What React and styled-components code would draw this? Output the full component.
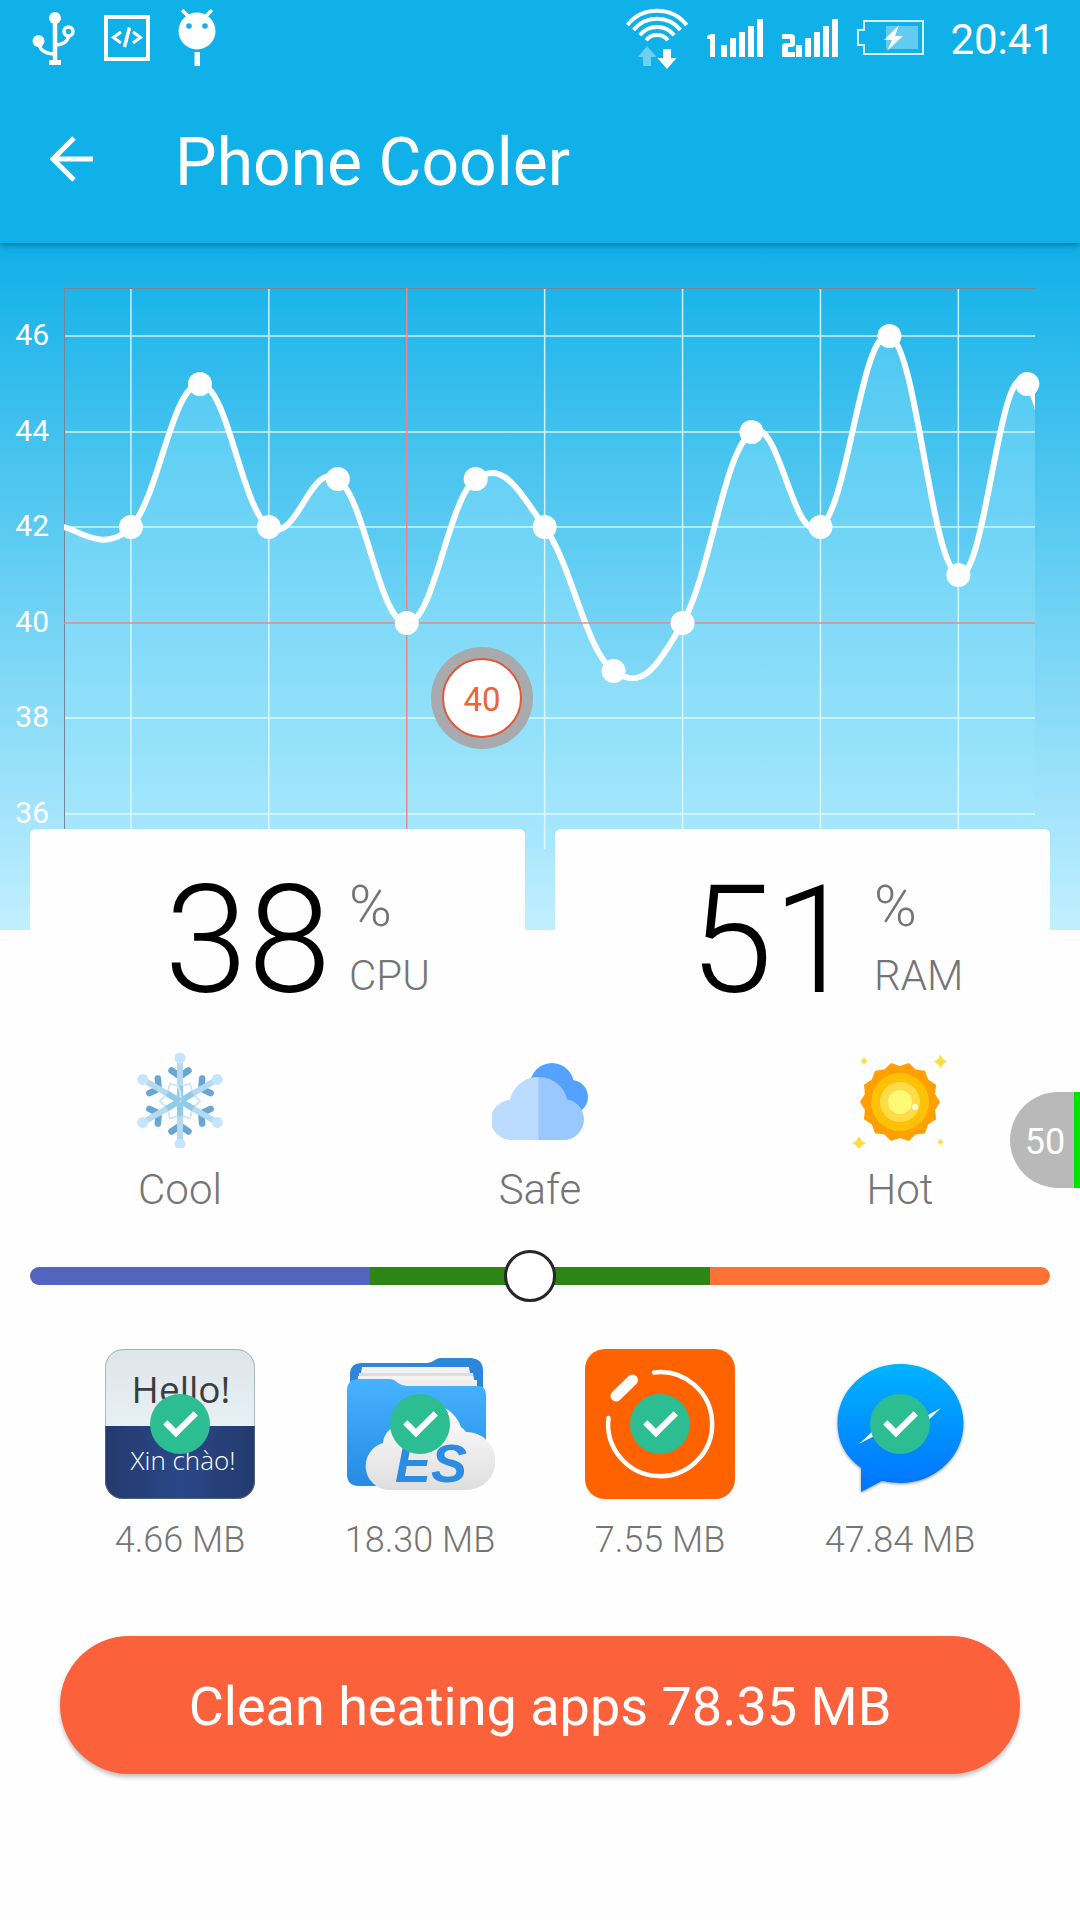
import React, { useState } from "react";
import styled, { createGlobalStyle } from "styled-components";

const GlobalStyle = createGlobalStyle`
  *, *::before { box-sizing: border-box; }
  body {
    margin: 0;
    background: #fefefe;
    font-family: Roboto, "Noto Sans", sans-serif;
  }
`;

const Screen = styled.main`
  position: relative;
  width: 100%;
  min-height: 100vh;
  overflow: hidden;
`;

const Header = styled.header`
  position: relative;
  z-index: 1;
  color: #fff;
  background: #10b0e8;
  box-shadow: 0 1px 8px rgba(0, 50, 80, 0.6);
`;

const StatusBar = styled.div`
  display: flex;
  align-items: center;
  justify-content: space-between;
  height: 75px;
  padding: 0 25px 0 32px;
`;

const StatusGroup = styled.div`
  display: flex;
  align-items: center;
  gap: ${(p) => p.$gap}px;
`;

const Clock = styled.time`
  margin-left: 6px;
  padding-top: 4px;
  font-size: 42px;
  line-height: 48px;
`;

const Toolbar = styled.div`
  display: flex;
  align-items: center;
  gap: 67px;
  height: 168px;
  padding: 0 40px 0 36px;
`;

const BackButton = styled.button`
  display: grid;
  place-items: center;
  width: 72px;
  height: 72px;
  padding: 0;
  border: 0;
  background: none;
  color: inherit;
`;

const Title = styled.h1`
  margin: 0;
  padding-top: 8px;
  font-size: 66px;
  line-height: 78px;
  font-weight: 400;
`;

const Hero = styled.section`
  background: linear-gradient(#10b0e8, #c2efff);

  svg { display: block; width: 100%; height: auto; }
`;

const StatRow = styled.section`
  position: relative;
  display: grid;
  grid-template-columns: 1fr 1fr;
  gap: 30px;
  margin-top: -101px;
  padding: 0 30px;
`;

const StatCard = styled.article`
  display: grid;
  grid-template-columns: 301fr 176fr;
  column-gap: 18px;
  height: 199px;
  padding-top: 37px;
  border-radius: 6px;
  background: #fefefe;
  font-weight: 300;
`;

const StatValue = styled.div`
  color: #000;
  font-size: 150px;
  line-height: 150px;
  text-align: right;
`;

const StatLabels = styled.div`
  display: flex;
  flex-direction: column;
  color: #757575;
`;

const Percent = styled.span`
  font-size: 58px;
  line-height: 80px;
`;

const StatName = styled.span`
  font-size: 42px;
  line-height: 60px;
`;

const Levels = styled.section`
  display: grid;
  grid-template-columns: repeat(3, 1fr);
  padding-top: 24px;
`;

const Level = styled.div`
  display: flex;
  flex-direction: column;
  align-items: center;
  gap: 18px;
  color: #757575;
  font-size: 42px;
  line-height: 48px;
  font-weight: 300;
`;

const SliderBox = styled.div`
  padding: 36px 30px 0;
`;

const HeatSlider = styled.input`
  display: block;
  appearance: none;
  width: 100%;
  height: 52px;
  margin: 0;
  background: none;

  &::-webkit-slider-runnable-track {
    height: 18px;
    border-radius: 9px;
    background: linear-gradient(
      90deg,
      #5264bb 0 33.33%,
      #2d8516 33.33% 66.66%,
      #ff7235 66.66%
    );
  }
  &::-webkit-slider-thumb {
    appearance: none;
    box-sizing: border-box;
    width: 52px;
    height: 52px;
    margin-top: -17px;
    border: 3px solid #272727;
    border-radius: 50%;
    background: #fff;
  }
`;

const Apps = styled.section`
  display: grid;
  grid-template-columns: repeat(4, 1fr);
  padding: 47px 60px 0;
`;

const AppItem = styled.label`
  display: flex;
  flex-direction: column;
  align-items: center;
  gap: 20px;
  color: #757575;
  font-size: 36px;
  line-height: 42px;
  font-weight: 300;
`;

const AppPicture = styled.span`
  display: grid;
  place-items: center;

  & > * { grid-area: 1 / 1; }
`;

const AppCheck = styled.input`
  appearance: none;
  display: grid;
  justify-content: center;
  width: 60px;
  height: 60px;
  margin: 0;
  padding-top: 17px;
  border-radius: 50%;
  background: #2cbd92;
  opacity: ${(p) => (p.checked ? 1 : 0.3)};

  &::before {
    content: "";
    width: 31px;
    height: 18px;
    border: solid #fff;
    border-width: 0 0 6px 6px;
    transform: rotate(-45deg);
  }
`;

const ActionBox = styled.div`
  padding: 75px 60px 60px;
`;

const CleanButton = styled.button`
  display: block;
  width: 100%;
  height: 138px;
  padding: 4px 0 0;
  border: 0;
  border-radius: 69px;
  background: #fb613b;
  box-shadow: 0 3px 4px rgba(0, 0, 0, 0.25);
  color: #fff;
  font: 400 54px/64px Roboto, "Noto Sans", sans-serif;
`;

const FloatingGauge = styled.button`
  position: absolute;
  top: 1092px;
  right: 0;
  width: 70px;
  height: 96px;
  padding: 4px 0 0 6px;
  border: 0;
  border-right: 6px solid #00e400;
  border-radius: 48px 0 0 48px;
  background: #b9b9b9;
  color: #fff;
  font: 400 36px/42px Roboto, "Noto Sans", sans-serif;
`;

/* ---------- status bar ---------- */

const UsbIcon = () => (
  <svg width="44" height="56" viewBox="0 0 44 56" fill="none" stroke="#fff" strokeWidth="4.5">
    <circle cx="23" cy="8" r="6" fill="#fff" stroke="none" />
    <path d="M23 8V50" />
    <path d="M17 52.5H29" strokeWidth="5" />
    <circle cx="6.500" cy="31" r="6" fill="#fff" stroke="none" />
    <path d="M7 34Q9 44 23 44" strokeWidth="3.500" />
    <circle cx="36.500" cy="21.500" r="4.500" strokeWidth="3.500" />
    <path d="M37 25Q35 35 23 35" strokeWidth="3.500" />
  </svg>
);

const CodeIcon = () => (
  <svg width="46" height="46" viewBox="0 0 46 46" fill="none" stroke="#fff">
    <rect x="2" y="2" width="42" height="42" strokeWidth="4" />
    <path d="M17 17L9.500 22.500L17 28M29 17L36.500 22.500L29 28" strokeWidth="3" />
    <path d="M25.500 12.500L20.500 32" strokeWidth="3.500" />
  </svg>
);

const DroidIcon = () => (
  <svg width="38" height="58" viewBox="0 0 38 58">
    <path d="M4 1L12 9M34 1L26 9" stroke="#fff" strokeWidth="3.500" />
    <circle cx="19" cy="22" r="18.500" fill="#fff" />
    <circle cx="11" cy="17" r="2.800" fill="#10b0e8" />
    <circle cx="27" cy="17" r="2.800" fill="#10b0e8" />
    <rect x="16.500" y="43" width="5.500" height="14" fill="#fff" />
  </svg>
);

const WifiIcon = () => {
  const arcs = [38, 30, 22, 14];
  return (
    <svg width="62" height="62" viewBox="0 0 62 62" fill="none" stroke="#fff" strokeWidth="4">
      {arcs.map((r) => (
        <path
          key={r}
          d={`M${31 - r * 0.78} ${42 - r * 0.63}A${r} ${r} 0 0 1 ${31 + r * 0.78} ${42 - r * 0.63}`}
        />
      ))}
      <path d="M21 39L30.500 50H25V59H17V50H12Z" fill="#fff" stroke="none" opacity="0.4" />
      <path d="M41 62L31.500 51H37V42H45V51H50.500Z" fill="#fff" stroke="none" />
    </svg>
  );
};

const SignalIcon = ({ slot }) => (
  <svg width="56" height="38" viewBox="0 0 56 38" fill="#fff">
    {slot === 1 ? (
      <path d="M0 17L4 15H8V38H3V20H0Z" />
    ) : (
      <path d="M0 15H9Q13 15 13 19V25Q13 28 9 28H6V33H13V38H0V28Q0 24 4 24H8V20H0Z" />
    )}
    {[0, 1, 2, 3, 4].map((i) => {
      const h = [12, 19, 25, 31, 38][i];
      return <rect key={i} x={14 + i * 9} y={38 - h} width="6" height={h} />;
    })}
  </svg>
);

const BatteryIcon = () => (
  <svg width="68" height="38" viewBox="0 0 68 38">
    <path
      d="M7 2H66V35H7V26H1V11H7Z"
      fill="none" stroke="#d4f1fc" strokeWidth="2"
    />
    <rect x="29" y="7" width="32" height="23" fill="#fff" opacity="0.35" />
    <path d="M42 6L27 21H35L30 32L46 17H38Z" fill="#fff" />
  </svg>
);

const BackIcon = () => (
  <svg width="44" height="46" viewBox="0 0 44 46" fill="none" stroke="#fff" strokeWidth="5">
    <path d="M24 2L3 23L24 44M3 23H43" />
  </svg>
);

/* ---------- temperature chart ---------- */

const READINGS = [42, 42, 45, 42, 43, 40, 43, 42, 39, 40, 44, 42, 46, 41, 45, 37];
const TICKS = [46, 44, 42, 40, 38, 36];
const PLOT = { left: 64, right: 1035, top: 45, bottom: 606 };
const xAt = (i) => 62 + i * 68.95;
const yAt = (v) => Math.round(93 + (46 - v) * 47.8);

const points = READINGS.map((v, i) => ({ x: xAt(i), y: yAt(v) }));

const linePath = points.reduce((d, p, i) => {
  if (i === 0) return `M${p.x} ${p.y}`;
  const prev = points[i - 1];
  const before = points[i - 2] || prev;
  const next = points[i + 1] || p;
  const c1 = [prev.x + (p.x - before.x) * 0.2, prev.y + (p.y - before.y) * 0.2];
  const c2 = [p.x - (next.x - prev.x) * 0.2, p.y - (next.y - prev.y) * 0.2];
  return `${d}C${c1} ${c2} ${p.x} ${p.y}`;
}, "");

const Chart = () => (
  <svg viewBox="0 0 1080 687" role="img" aria-label="Temperature history">
    <defs>
      <clipPath id="plot">
        <rect x={PLOT.left} y={PLOT.top} width={PLOT.right - PLOT.left} height={PLOT.bottom - PLOT.top} />
      </clipPath>
    </defs>
    <path
      d={`${linePath}V${PLOT.bottom}H${points[0].x}Z`}
      fill="#9feaff" opacity="0.32" clipPath="url(#plot)"
    />
    <g fill="none" stroke="#e6fcff" strokeWidth="1.500" opacity="0.85">
      {TICKS.filter((t) => t !== 40).map((t) => (
        <path key={t} d={`M${PLOT.left} ${yAt(t)}H${PLOT.right}`} />
      ))}
      {[1, 3, 7, 9, 11, 13].map((i) => (
        <path key={i} d={`M${xAt(i)} ${PLOT.top}V${PLOT.bottom}`} />
      ))}
    </g>
    <path
      d={`M64.500 ${PLOT.bottom}V45.500H${PLOT.right}`}
      fill="none" stroke="#71879a" strokeWidth="1"
    />
    <path d={linePath} fill="none" stroke="#fff" strokeWidth="6" clipPath="url(#plot)" />
    <path
      d={`M${PLOT.left} ${yAt(40)}H${PLOT.right}M${xAt(5)} ${PLOT.top}V${PLOT.bottom}`}
      fill="none" stroke="#ef8684" strokeWidth="1.500"
    />
    {points.slice(1, 15).map((p) => (
      <circle key={p.x} cx={p.x} cy={p.y} r="12" fill="#fff" />
    ))}
    <g fill="#fff" fontSize="30" textAnchor="end">
      {TICKS.map((t) => (
        <text key={t} x="49" y={yAt(t) + 9}>{t}</text>
      ))}
    </g>
    <circle cx="482" cy="455" r="51" fill="#aaa6a9" opacity="0.95" />
    <circle cx="482" cy="455" r="39" fill="#fff" stroke="#e0573b" strokeWidth="2" />
    <text x="482" y="468" fontSize="33" fill="#f0623e" textAnchor="middle">40</text>
  </svg>
);

/* ---------- temperature levels ---------- */

const Snowflake = () => (
  <svg width="96" height="96" viewBox="0 0 96 96" fill="none">
    {[0, 60, 120, 180, 240, 300].map((a) => (
      <g key={a} transform={`rotate(${a} 48 49)`}>
        <g transform="rotate(30 48 49)">
          <path d="M48 49Q41 40 43 34L48 29L53 34Q55 40 48 49Z" stroke="#cfe8fb" strokeWidth="2" />
        </g>
        <path d="M46 23L39.500 18.500M50 23L56.500 18.500" stroke="#68a6d4" strokeWidth="6.500" strokeLinecap="round" />
        <path d="M48 49V10" stroke="#b4d9f1" strokeWidth="6" />
        <path d="M48 49V34" stroke="#92cbea" strokeWidth="6" />
        <circle cx="48" cy="6" r="5.500" fill="#c4e5fd" />
      </g>
    ))}
  </svg>
);

const Clouds = () => (
  <svg width="96" height="96" viewBox="0 0 96 96">
    <g fill="#55a2fe">
      <circle cx="60" cy="33" r="22" />
      <circle cx="79" cy="45" r="17" />
    </g>
    <g fill="#9ac8fe">
      <circle cx="47" cy="54" r="29" />
      <circle cx="71.500" cy="67.500" r="20.500" />
      <rect x="46" y="60" width="26" height="28" />
    </g>
    <path d="M46.500 25A29 29 0 0 0 18 48A20 20 0 0 0 20 88H46.500Z" fill="#bbdbff" />
  </svg>
);

const sunRim = Array.from({ length: 28 }, (_, i) => {
  const r = i % 2 ? 36 : 40;
  const a = (i * Math.PI) / 14;
  return `${(48 + r * Math.cos(a)).toFixed(2)},${(50 + r * Math.sin(a)).toFixed(2)}`;
}).join(" ");

const sparkle = (x, y, r) =>
  `M${x} ${y - r}Q${x + r / 4} ${y - r / 4} ${x + r} ${y}Q${x + r / 4} ${y + r / 4} ${x} ${y + r}Q${x - r / 4} ${y + r / 4} ${x - r} ${y}Q${x - r / 4} ${y - r / 4} ${x} ${y - r}Z`;

const Sun = () => (
  <svg width="96" height="96" viewBox="0 0 96 96">
    <polygon points={sunRim} fill="#ffa000" />
    <circle cx="48" cy="50" r="29" fill="#ffc107" />
    <circle cx="48" cy="50" r="20" fill="#ffdc48" />
    <circle cx="48" cy="50" r="12" fill="#fffa76" />
    <circle cx="63" cy="55" r="3" fill="#fffbe0" />
    <path
      d={sparkle(12, 9, 4) + sparkle(88.5, 9.5, 7) + sparkle(7, 91, 7) + sparkle(88.5, 90, 3.5)}
      fill="#ffdb42"
    />
  </svg>
);

/* ---------- app icons ---------- */

const TranslatorIcon = () => (
  <svg width="150" height="150" viewBox="0 0 150 150">
    <defs>
      <linearGradient id="trTop" x2="0" y2="1">
        <stop offset="0" stopColor="#dde5e8" />
        <stop offset="1" stopColor="#e7f0f6" />
      </linearGradient>
      <linearGradient id="trBase">
        <stop offset="0" stopColor="#233a6d" />
        <stop offset="0.500" stopColor="#2a4788" />
        <stop offset="1" stopColor="#233a6d" />
      </linearGradient>
      <clipPath id="trClip"><rect width="150" height="150" rx="18" /></clipPath>
    </defs>
    <g clipPath="url(#trClip)">
      <rect width="150" height="77" fill="url(#trTop)" />
      <rect y="77" width="150" height="73" fill="url(#trBase)" />
    </g>
    <rect x="0.500" y="0.500" width="149" height="149" rx="18" fill="none" stroke="#6f7f96" strokeOpacity="0.500" />
    <g fontFamily="'Open Sans', 'Noto Sans', sans-serif" textAnchor="middle">
      <text x="76" y="54" fontSize="37" fontWeight="400" fill="#3a3d40">Hello!</text>
      <text x="78" y="121" fontSize="26" fontWeight="300" fill="#fff">Xin chào!</text>
    </g>
  </svg>
);

const FilesIcon = () => (
  <svg width="150" height="150" viewBox="0 0 150 150">
    <defs>
      <linearGradient id="esFront" x2="0" y2="1">
        <stop offset="0" stopColor="#47b3ff" />
        <stop offset="1" stopColor="#258be3" />
      </linearGradient>
      <linearGradient id="esCloud" x2="0" y2="1">
        <stop offset="0" stopColor="#ffffff" />
        <stop offset="1" stopColor="#dedede" />
      </linearGradient>
    </defs>
    <path d="M5 34V24Q6 14 16 14H82Q86 14 90 11Q92 9 96 9H126Q138 10 138 22V60H5Z" fill="#2b86dc" />
    <path d="M17 18H124L126 30H15Z" fill="#f2f0f0" />
    <path d="M14 24H128L130 36H14Z" fill="#dcdce2" />
    <path d="M13 27H128L130 42H13Z" fill="#f6f4f3" />
    <path d="M50 31H132V42H50Z" fill="#f1efee" />
    <path d="M2 40Q3 30 13 30H44Q49 30 53 34Q57 37 62 37H133Q141 37 141 46V128Q141 137 132 137H14Q2 137 2 125Z" fill="url(#esFront)" />
    <path
      d="M43 141A24 24 0 0 1 38 94Q39 82 50 78A35 35 0 0 1 116 78Q119 80 121 83A29 29 0 0 1 122 141Z"
      fill="url(#esCloud)"
    />
    <text
      x="50" y="133" fontSize="54" fontWeight="700" fontStyle="italic" fill="#2b8ce2"
      fontFamily="'Liberation Sans', sans-serif"
    >
      ES
    </text>
  </svg>
);

const TimerIcon = () => (
  <svg width="150" height="150" viewBox="0 0 150 150" fill="none" stroke="#fff" strokeLinecap="round">
    <rect width="150" height="150" rx="20" fill="#ff6200" stroke="none" />
    <path d="M23.500 69A52 52 0 1 0 69 23.500" strokeWidth="4.500" />
    <path d="M31 47L47.500 31" strokeWidth="11" />
  </svg>
);

const MessengerIcon = () => (
  <svg width="150" height="150" viewBox="0 0 150 150">
    <defs>
      <linearGradient id="msg" x2="0" y2="1">
        <stop offset="0" stopColor="#00b4ff" />
        <stop offset="0.900" stopColor="#0078ff" />
      </linearGradient>
      <filter id="msgShadow" x="-0.100" y="-0.100" width="1.200" height="1.200">
        <feDropShadow dx="0" dy="1" stdDeviation="1.500" floodOpacity="0.400" />
      </filter>
    </defs>
    <path
      d="M75.500 15C110 15 138.500 41 138.500 74.500S110 134 75.500 134Q66 134 57 132L36 143V119Q12.500 102 12.500 74.500C12.500 41 41 15 75.500 15Z"
      fill="url(#msg)" filter="url(#msgShadow)"
    />
    <path d="M34 95L66 65L82 77L116 59L86 88L70 76Z" fill="#fff" />
  </svg>
);

const LEVELS = [
  { name: "Cool", Icon: Snowflake },
  { name: "Safe", Icon: Clouds },
  { name: "Hot", Icon: Sun },
];

const STATS = [
  { name: "CPU", value: 38 },
  { name: "RAM", value: 51 },
];

const APPS = [
  { size: "4.66 MB", Icon: TranslatorIcon },
  { size: "18.30 MB", Icon: FilesIcon },
  { size: "7.55 MB", Icon: TimerIcon },
  { size: "47.84 MB", Icon: MessengerIcon },
];

export default function App() {
  const [heat, setHeat] = useState(49);
  const [picked, setPicked] = useState(() => APPS.map(() => true));
  const toggle = (i) => setPicked((all) => all.map((on, k) => (k === i ? !on : on)));

  return (
    <Screen>
      <GlobalStyle />
      <Header>
        <StatusBar>
          <StatusGroup $gap={28}>
            <UsbIcon />
            <CodeIcon />
            <DroidIcon />
          </StatusGroup>
          <StatusGroup $gap={19}>
            <WifiIcon />
            <SignalIcon slot={1} />
            <SignalIcon slot={2} />
            <BatteryIcon />
            <Clock>20:41</Clock>
          </StatusGroup>
        </StatusBar>
        <Toolbar>
          <BackButton type="button" aria-label="Back"><BackIcon /></BackButton>
          <Title>Phone Cooler</Title>
        </Toolbar>
      </Header>

      <Hero><Chart /></Hero>

      <StatRow>
        {STATS.map(({ name, value }) => (
          <StatCard key={name}>
            <StatValue>{value}</StatValue>
            <StatLabels>
              <Percent>%</Percent>
              <StatName>{name}</StatName>
            </StatLabels>
          </StatCard>
        ))}
      </StatRow>

      <Levels>
        {LEVELS.map(({ name, Icon }) => (
          <Level key={name}>
            <Icon />
            <span>{name}</span>
          </Level>
        ))}
      </Levels>

      <SliderBox>
        <HeatSlider
          type="range"
          min="0"
          max="100"
          value={heat}
          onChange={(e) => setHeat(Number(e.target.value))}
          aria-label="Heat level"
        />
      </SliderBox>

      <Apps>
        {APPS.map(({ size, Icon }, i) => (
          <AppItem key={size}>
            <AppPicture>
              <Icon />
              <AppCheck type="checkbox" checked={picked[i]} onChange={() => toggle(i)} />
            </AppPicture>
            <span>{size}</span>
          </AppItem>
        ))}
      </Apps>

      <ActionBox>
        <CleanButton type="button">Clean heating apps 78.35 MB</CleanButton>
      </ActionBox>

      <FloatingGauge type="button">50</FloatingGauge>
    </Screen>
  );
}
